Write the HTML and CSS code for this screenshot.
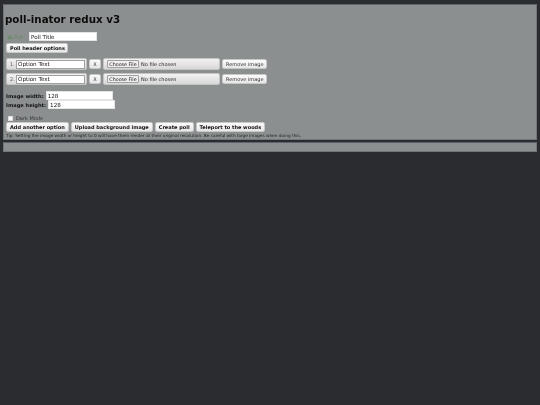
FILE: index.html
```html
<!DOCTYPE html>
<html lang="en">
<head>
  <meta charset="UTF-8" />
  <title>poll-inator redux v3</title>
  <link rel="stylesheet" href="styles.css">
</head>
<body>
  <div class="panel main">
    <h1>poll-inator redux v3</h1>

    <div class="title-row">
      <span class="poll-tag">
        <svg class="poll-icon" viewBox="0 0 8 8"><path d="M1 7V3h1.4v4zM3.4 7V1h1.4v6zM5.8 7V4h1.4v3z" fill="#5f8a62"/></svg>
        Poll
      </span>
      <input class="text-input poll-title" type="text" value="Poll Title">
    </div>
    <button class="btn header-btn">Poll header options</button>

    <div class="options">
      <div class="option">
        <div class="card name-card"><span class="num">1.</span><input class="text-input option-text" type="text" value="Option Text"></div>
        <button class="btn small x-btn">X</button>
        <div class="card file-card"><span class="fake-file">Choose File</span><span class="no-file">No file chosen</span></div>
        <button class="btn small">Remove image</button>
      </div>
      <div class="option">
        <div class="card name-card"><span class="num">2.</span><input class="text-input option-text" type="text" value="Option Text"></div>
        <button class="btn small x-btn">X</button>
        <div class="card file-card"><span class="fake-file">Choose File</span><span class="no-file">No file chosen</span></div>
        <button class="btn small">Remove image</button>
      </div>
    </div>

    <div class="size-row"><label>Image width:</label><input class="text-input size" type="text" value="128"></div>
    <div class="size-row"><label>Image height:</label><input class="text-input size" type="text" value="128"></div>

    <div class="dark-row"><span class="check"></span><span>Dark Mode</span></div>

    <div class="actions">
      <button class="btn">Add another option</button>
      <button class="btn">Upload background image</button>
      <button class="btn">Create poll</button>
      <button class="btn">Teleport to the woods</button>
    </div>
    <p class="tip">Tip: Setting the image width or height to 0 will have them render at their original resolution. Be careful with large images when doing this.</p>
  </div>
  <div class="panel footer"></div>
</body>
</html>
```

FILE: styles.css
```css
* {
  box-sizing: border-box;
  font-family: 'DejaVu Sans', sans-serif;
}

body {
  background: #2a2c30;
  margin: 0;
  padding: 4px 3px 0;
  height: 405px;
  overflow: hidden;
  color: #111;
}

.panel {
  background: #8c8f90;
  border: 1px solid #6f767c;
  border-top-color: #5d646b;
}

.main {
  height: 136px;
  padding: 7px 2px 0 1px;
}

/* reference is a soft downscale, text has no hard edges */
.main > * {
  filter: blur(0.2px);
}

.footer {
  height: 10px;
  margin-top: 2px;
}

h1 {
  font-size: 10.3px;
  font-weight: bold;
  line-height: 14px;
  margin: 0 0 6px 0;
  color: #0c0c0c;
}

.title-row {
  display: flex;
  align-items: center;
  height: 9px;
  margin-bottom: 2px;
}

.poll-tag {
  display: flex;
  align-items: center;
  gap: 1px;
  width: 24px;
  padding-left: 2px;
  font-size: 5px;
  color: #5f8a62;
}

.poll-icon {
  width: 6px;
  height: 6px;
}

.text-input {
  border: 1px solid #e4e4e4;
  background: #fff;
  color: #111;
  font-size: 5.6px;
  padding: 0 1px;
  height: 9px;
  border-radius: 0;
  outline: none;
}

.poll-title {
  width: 68px;
}

.btn {
  display: block;
  height: 10px;
  padding: 0 3px;
  font-size: 5px;
  font-weight: bold;
  color: #111;
  white-space: nowrap;
  background: linear-gradient(#fbfbfb, #e6e6e6);
  border: 1px solid #c8c8c8;
  border-radius: 2px;
}

.header-btn {
  width: 62px;
  margin-left: 1px;
}

.options {
  margin-top: 5px;
  display: flex;
  flex-direction: column;
  gap: 3px;
  padding-left: 1px;
}

.option {
  display: flex;
  align-items: center;
  gap: 2px;
  height: 12px;
}

.card {
  display: flex;
  align-items: center;
  height: 12px;
  background: linear-gradient(#f2f2f2, #d8d8d8);
  border: 1px solid #c4c4c4;
  border-radius: 2px;
}

.name-card {
  width: 81px;
  padding-left: 3px;
}

.num {
  font-size: 5px;
  color: #666;
  width: 6px;
}

.option-text {
  width: 69px;
  height: 9px;
  border-color: #a0a0a0;
}

.small {
  font-weight: normal;
  font-size: 5px;
  color: #333;
  height: 10px;
}

.x-btn {
  width: 12px;
  padding: 0;
}

.file-card {
  width: 117px;
  padding-left: 3px;
}

.fake-file {
  display: flex;
  align-items: center;
  justify-content: center;
  height: 8px;
  width: 32px;
  font-size: 4.8px;
  color: #111;
  background: #efefef;
  border: 1px solid #a0a0a0;
  border-radius: 1px;
}

.no-file {
  font-size: 5px;
  color: #222;
  margin-left: 2px;
}

.size-row {
  display: flex;
  align-items: center;
  gap: 2px;
  height: 9px;
  padding-left: 1px;
}

.options + .size-row {
  margin-top: 6px;
}

label {
  font-size: 5.1px;
  font-weight: bold;
}

.size {
  width: 67px;
}

.dark-row {
  display: flex;
  align-items: center;
  height: 6px;
  margin: 6px 0 0 3px;
  font-size: 5px;
  color: #333;
}

.check {
  width: 5px;
  height: 5px;
  background: #fff;
  border: 1px solid #ddd;
  margin-right: 3px;
}

.actions {
  display: flex;
  gap: 2px;
  margin-top: 1px;
  padding-left: 1px;
}

.tip {
  font-size: 4.25px;
  color: #222;
  margin: 1px 0 0 1px;
  line-height: 6px;
  white-space: nowrap;
}
```
